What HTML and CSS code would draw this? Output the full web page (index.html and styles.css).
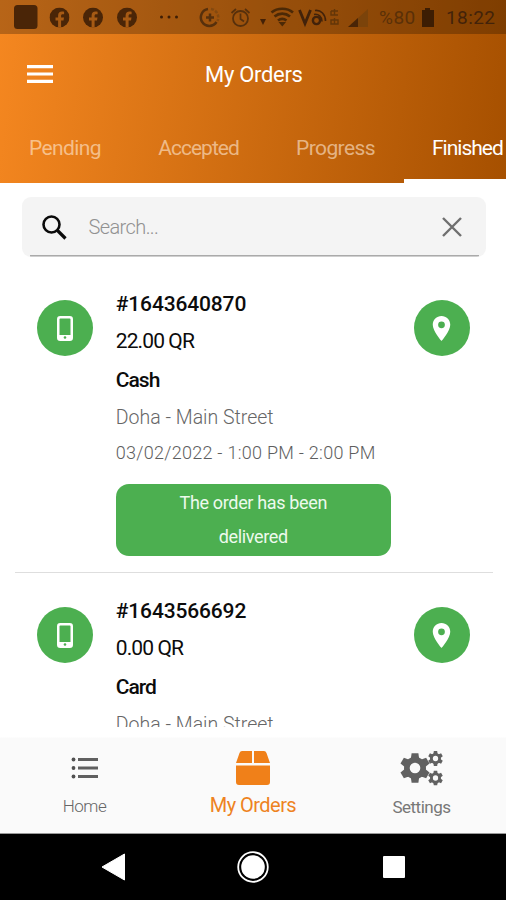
FILE: index.html
```html
<!DOCTYPE html>
<html lang="en">
<head>
<meta charset="utf-8">
<meta name="viewport" content="width=device-width, initial-scale=1">
<title>My Orders</title>
<link rel="stylesheet" href="styles.css">
</head>
<body>
<svg class="defs" width="0" height="0" aria-hidden="true">
  <symbol id="fb" viewBox="0 0 20 20"><circle cx="10" cy="10" r="10" fill="#4a2507"/><path d="M8.600 20v-7H6v-3h2.600V8c0-2.800 1.500-4 3.900-4 .9 0 1.600.1 2.100.2v2.500h-1.400c-1.200 0-1.600.6-1.600 1.500V10h2.900l-.5 3h-2.400v7z" fill="#a65a14"/></symbol>
  <symbol id="phone" viewBox="0 0 16 25"><rect x="1.250" y="1.250" width="13.500" height="22.500" rx="2" fill="none" stroke="#fff" stroke-width="2.500"/><path d="M1 19h14v4H1z" fill="#fff"/><circle cx="8" cy="21.500" r="1.300" fill="#4caf50"/></symbol>
  <symbol id="pin" viewBox="5 2 14 20"><path fill="#fff" d="M12 2C8.130 2 5 5.130 5 9c0 5.250 7 13 7 13s7-7.750 7-13c0-3.870-3.130-7-7-7zm0 9.700a2.700 2.700 0 1 1 0-5.400 2.700 2.700 0 0 1 0 5.400z"/></symbol>
</svg>
<div class="screen">
  <header class="top">
    <div class="status">
      <svg width="506" height="34" viewBox="0 0 506 34">
        <rect x="14" y="5" width="23.500" height="24" rx="3.500" fill="#4a2507"/>
        <use href="#fb" x="49.500" y="7.500" width="20" height="20"/>
        <use href="#fb" x="83" y="7.500" width="20" height="20"/>
        <use href="#fb" x="117" y="7.500" width="20" height="20"/>
        <g fill="#3e1e05"><circle cx="161.500" cy="17" r="1.500"/><circle cx="169" cy="17" r="1.500"/><circle cx="176.500" cy="17" r="1.500"/></g>
        <g fill="none" stroke="#57300c" stroke-width="2.500">
          <path d="M208 9a8.500 8.500 0 1 0 8.500 13M206 17.500h8M210 13.500v8"/>
          <path d="M211 9a8.500 8.500 0 0 1 6.500 12" stroke="#84490f" stroke-dasharray="3 1.500"/>
          <circle cx="240.500" cy="18.500" r="7.500" stroke-width="1.800"/>
          <path d="M240.500 13.500v5.500l3.500 2.500M231.500 13l4.500-4M249.500 13l-4.500-4" stroke-width="1.700"/>
        </g>
        <path d="M260 19h6l-3 6z" fill="#442106"/>
        <g fill="none" stroke="#4c2906" stroke-width="2.700">
          <path d="M271.500 12.500c6-5 15.500-5 21.500 0M274.500 16.500c4.500-3.800 11-3.800 15.500 0M278 20.500c2.500-2 6-2 8.500 0"/>
        </g>
        <path d="M278.500 22h7.500l-3.700 4.500z" fill="#4c2906"/>
        <g fill="none" stroke="#42220a" stroke-width="2.800">
          <path d="M299.500 10l5.500 13.500 5.500-13.500"/>
          <circle cx="316.500" cy="20.500" r="3.600" stroke-width="2.400"/>
          <path d="M314 14.500c4.500-1 8 2.500 8 7M315 10.500c6-.8 10.500 4 10.500 10.500" stroke-width="1.600"/>
          <path d="M331 11v4h7M331 11h7M331 20h7v4h-7zM334.500 9v6M334.500 18v6" stroke="#633608" stroke-width="1.400"/>
        </g>
        <path d="M348 27l20-18v18z" fill="#7b430a"/>
        <path d="M348 27l10-9v9z" fill="#492406"/>
        <path d="M422 10h3V8h5v2h4v17h-12V10z" fill="#3d1d03"/>
      </svg>
      <span class="pct">%80</span><span class="clock">18:22</span>
    </div>
    <div class="bar">
      <svg class="menu" width="26" height="18" viewBox="0 0 26 18"><path d="M0 1.700h26M0 9h26M0 16.300h26" stroke="#fff" stroke-width="3.200"/></svg>
      <h1><span>My Orders</span></h1>
    </div>
    <nav class="tabs">
      <a class="t1">Pending</a><a class="t2">Accepted</a><a class="t3">Progress</a><a class="t4 on">Finished</a>
    </nav>
  </header>
  <main>
    <div class="search">
      <svg width="25" height="25" viewBox="0 0 25 25" fill="none" stroke="#0a0a0a"><circle cx="9.500" cy="9.500" r="8" stroke-width="2.600"/><path d="M15.500 15.500l8 8" stroke-width="3.200"/></svg>
      <span class="ph">Search...</span>
      <svg width="20" height="20" viewBox="0 0 20 20"><path d="M1 1l18 18M19 1L1 19" stroke="#6f6f6f" stroke-width="2.400"/></svg>
    </div>
    <section class="order">
      <div class="round"><svg width="16" height="25"><use href="#phone"/></svg></div>
      <div class="info">
        <p class="num">#1643640870</p>
        <p class="amt">22.00 QR</p>
        <p class="pay">Cash</p>
        <p class="addr">Doha - Main Street</p>
        <p class="date">03/02/2022 - 1:00 PM - 2:00 PM</p>
        <div class="state"><span>The order has been</span><span>delivered</span></div>
      </div>
      <div class="round"><svg width="19" height="25"><use href="#pin"/></svg></div>
    </section>
    <section class="order second">
      <div class="round"><svg width="16" height="25"><use href="#phone"/></svg></div>
      <div class="info">
        <p class="num">#1643566692</p>
        <p class="amt">0.00 QR</p>
        <p class="pay">Card</p>
        <p class="addr">Doha - Main Street</p>
      </div>
      <div class="round"><svg width="19" height="25"><use href="#pin"/></svg></div>
    </section>
  </main>
  <nav class="bottom">
    <a class="home">
      <svg width="44" height="36" viewBox="0 0 44 36"><path d="M15 8.500h20M15 17h20M15 25.500h20" stroke="#606060" stroke-width="2.800"/><g fill="#505050"><circle cx="10.500" cy="8.500" r="1.900"/><circle cx="10.500" cy="17" r="1.900"/><circle cx="10.500" cy="25.500" r="1.900"/></g></svg>
      <span>Home</span>
    </a>
    <a class="mine">
      <svg width="36" height="36" viewBox="0 0 36 36" fill="#f08019"><path d="M7 0h10v12H1L4.500 2Q5.200 0 7 0zM19 0h10q1.800 0 2.500 2L35 12H19zM1 14.500h34V31q0 3-3 3H4q-3 0-3-3z"/></svg>
      <span>My Orders</span>
    </a>
    <a class="set">
      <svg width="44" height="36" viewBox="0 0 44 36">
        <symbol id="gear" viewBox="-15 -15 30 30"><g fill="#616161"><path id="tooth" d="M-4.200-9L-3.400-14.800H3.400L4.200-9V9L3.400 14.800H-3.400L-4.200 9z"/><use href="#tooth" transform="rotate(60)"/><use href="#tooth" transform="rotate(120)"/><circle r="11"/></g><circle r="5.300" fill="#fafafa"/></symbol>
        <use href="#gear" x="0" y="2" width="30" height="30"/>
        <use href="#gear" x="28" y="0" width="15" height="15"/>
        <use href="#gear" x="28" y="19.500" width="15" height="15"/>
      </svg>
      <span>Settings</span>
    </a>
  </nav>
  <footer class="sys">
    <svg width="24" height="28" viewBox="0 0 24 28"><path d="M1 14L23.500 1v26z" fill="#fff" stroke="#fff" stroke-linejoin="round"/></svg>
    <svg width="34" height="34" viewBox="0 0 34 34"><circle cx="17" cy="17" r="14.800" fill="none" stroke="#fff" stroke-width="1.800"/><circle cx="17" cy="17" r="11.800" fill="#fff"/></svg>
    <svg width="22" height="22" viewBox="0 0 22 22"><rect width="22" height="22" rx="1" fill="#fff"/></svg>
  </footer>
</div>
</body>
</html>
```
FILE: styles.css
```css
* { box-sizing: border-box; margin: 0; padding: 0; }
body { width: 506px; height: 900px; overflow: hidden; background: #fff; font-family: Roboto, "Noto Sans", sans-serif; white-space: nowrap; }
svg { display: block; flex: none; }
.defs { position: absolute; }
.screen { display: flex; flex-direction: column; width: 506px; height: 900px; }
.top { height: 183px; flex: none; color: #fff; background: linear-gradient(97deg, #f58720, #a65000); overflow: hidden; }
.status { display: flex; align-items: center; height: 34px; background: rgba(0, 0, 0, .25); color: #43230a; font-size: 19px; line-height: 34px; position: relative; }
.status span { position: absolute; top: 1px; }
.status .pct { left: 379px; color: #5a3008; letter-spacing: .5px; }
.status .clock { left: 446px; letter-spacing: .4px; }
.bar { display: flex; align-items: center; height: 80px; padding-left: 27px; }
.bar h1 { margin-left: 152px; font-size: 22px; font-weight: 400; letter-spacing: -.3px; }
.tabs { display: grid; grid-template: 69px / 130px 137px 137px 102px; font-size: 21px; line-height: 68px; text-align: center; letter-spacing: -.6px; color: rgba(255, 235, 215, .6); }
.tabs .t2 { letter-spacing: -1px; }
.tabs .on { color: #fff; border-bottom: 4px solid #fff; text-align: left; padding-left: 28px; letter-spacing: -1px; }
main { flex: none; height: 544px; overflow: hidden; }
.search { display: flex; align-items: center; width: 464px; height: 60px; margin: 14px 0 0 21.500px; padding: 0 24px 0 20px; border-radius: 9px; background: linear-gradient(#aaa, #aaa) 8px 58px / 449px 1.500px no-repeat, #f4f4f4; }
.ph { flex: 1; margin-left: 22px; color: #919191; font-size: 20px; font-weight: 300; letter-spacing: -.6px; }
.order { display: grid; grid-template-columns: 56px 275px 56px; column-gap: 22.800px; width: 478px; height: 288px; margin: 28px 0 0 15px; padding-left: 22px; border-bottom: 1.500px solid #dedede; }
.round { display: flex; align-items: center; justify-content: center; width: 56px; height: 56px; margin-top: 15px; border-radius: 50%; background: #4caf50; }
.info p { height: 37px; line-height: 38px; font-size: 21px; color: #0c0c0c; }
.info .num { font-weight: 500; letter-spacing: -.15px; }
.info .amt { line-height: 39px; letter-spacing: -.9px; }
.info .pay { height: 38px; line-height: 42px; font-weight: 500; letter-spacing: -1px; }
.info .addr { height: 37px; line-height: 42px; font-size: 19.500px; font-weight: 300; color: #666; }
.info .date { height: 35px; line-height: 38px; font-size: 18px; font-weight: 300; color: #5e5e5e; letter-spacing: .27px; }
.state { display: flex; flex-direction: column; align-items: center; height: 72px; margin-top: 15px; padding-top: 2px; border-radius: 13px; background: #4caf50; color: #edfaed; font-size: 18px; line-height: 34px; letter-spacing: -.35px; }
.second { margin-top: 19px; border: 0; }
.bottom { display: grid; grid-template-columns: 169px 168px 169px; flex: none; height: 107px; padding-top: 24px; background: linear-gradient(#fff 10px, #fafafa 11px); border-bottom: 1px solid #999; color: #777; text-align: center; }
.bottom svg { margin: 0 auto; }
.bottom span { display: block; line-height: 36px; }
.home span { font-size: 17px; padding-top: 1px; font-weight: 300; color: #666; letter-spacing: -.5px; }
.mine span { font-size: 20px; color: #ee831f; letter-spacing: -.55px; }
.set span { font-size: 17px; padding-top: 2px; letter-spacing: -.5px; }
.sys { flex: 1; display: flex; align-items: center; background: #000; padding-left: 101px; }
.sys svg:nth-child(2) { margin: 0 113px 0 111px; }
```
